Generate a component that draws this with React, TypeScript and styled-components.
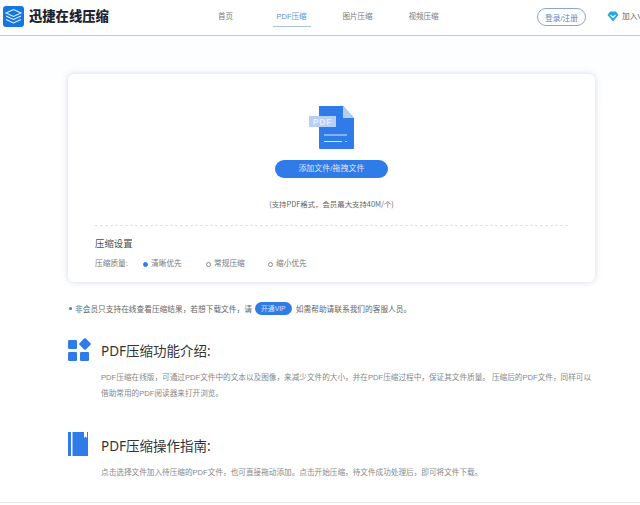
import React from "react";
import styled, { createGlobalStyle } from "styled-components";

const Global = createGlobalStyle`
  html, body { margin: 0; padding: 0; height: 505px; overflow: hidden; background: #fff; }
  body { font-family: "Liberation Sans", "Noto Sans CJK SC", sans-serif; color: #666; }
`;
const Page = styled.div`
  width: 640px; height: 505px; overflow: hidden; display: flex; flex-direction: column;
  background: linear-gradient(#fbfdff, #fff 120px);
`;
const Header = styled.header`
  height: 36px; flex: none; box-sizing: border-box; border-bottom: 1px solid #bccdd6; background: #fff;
  display: flex; align-items: stretch; padding-left: 3px; position: relative; white-space: nowrap;
`;
const Brand = styled.div`
  width: 189.5px; flex: none; display: flex; align-items: flex-start; gap: 5px; padding-top: 6px; box-sizing: border-box;
`;
const BrandName = styled.span`
  font-size: 13.3px; line-height: 20px; font-weight: 900; color: #1c2430;
  font-family: "Noto Sans CJK SC", sans-serif;
`;
const Nav = styled.nav`display: flex; width: 344.5px; flex: none;`;
const NavItem = styled.a<{ $active?: boolean }>`
  width: 66px; box-sizing: border-box; height: 28px; font-size: 7.5px;
  text-align: center; color: ${p => (p.$active ? "#5d8fd0" : "#777")};
  display: block;
  span { display: inline-block; height: 27px; padding: 0 4px; box-sizing: border-box; line-height: 34px;
    border-bottom: ${p => (p.$active ? "1px solid #a9c5dc" : "none")}; }
`;
const Login = styled.button`
  width: 49px; height: 18px; margin-top: 8px; flex: none; padding: 0; border: 1px solid #8fa6c4; border-radius: 9px;
  background: #fff; color: #5d86c4; font: 7.7px "Liberation Sans", "Noto Sans CJK SC", sans-serif;
`;
const Vip = styled.div`
  display: flex; align-items: flex-start; gap: 3px; margin-left: 21px; padding-top: 11px; font-size: 7.7px; line-height: 12px; color: #666;
`;
const Main = styled.main`flex: 1; padding: 38px 45px 0 68px; position: relative;`;
const Card = styled.section`
  width: 527px; height: 208px; box-sizing: border-box; background: #fff; border-radius: 6px;
  box-shadow: 0 0 6px rgba(90, 120, 160, 0.28); padding: 32px 27px 0; display: flex; flex-direction: column;
`;
const DocIcon = styled.svg`width: 45px; height: 44px; display: block; margin: 0 auto;`;
const AddButton = styled.button`
  display: block; width: 113px; height: 18px; margin: 10px auto 0; border: none; border-radius: 9px; padding: 0;
  background: #2f7be8; color: #dbe8fb; font: 8px/18px "Liberation Sans", "Noto Sans CJK SC", sans-serif;
`;
const Support = styled.p`
  margin: 20px 0 0; text-align: center; font: 7.4px/12px "Noto Sans CJK SC", sans-serif; color: #666;
`;
const Divider = styled.div`margin-top: 15px; border-top: 1px dashed #dfe3e8;`;
const SettingsTitle = styled.h3`
  margin: 10px 0 0; font: 400 9.4px/14px "Noto Sans CJK SC", sans-serif; color: #4d4d4d;
`;
const QualityRow = styled.div`display: flex; align-items: center; margin-top: 8px; font-size: 7.7px; line-height: 12px; color: #777;`;
const QualityLabel = styled.span`width: 48px;`;
const RadioOption = styled.label<{ $w: number }>`
  width: ${p => p.$w}px; display: flex; align-items: center; gap: 3px;
`;
const RadioDot = styled.i<{ $on?: boolean }>`
  width: 5px; height: 5px; box-sizing: border-box; border-radius: 50%;
  border: 1px solid ${p => (p.$on ? "#2f7be8" : "#8a8a8a")}; background: ${p => (p.$on ? "#2f7be8" : "#fff")};
`;
const Notice = styled.div`
  margin: 19px 0 0 1px; display: flex; align-items: center; height: 14px; font-size: 7.7px; color: #666; white-space: nowrap;
`;
const Bullet = styled.i`width: 3px; height: 3px; border-radius: 50%; background: #2f7be8; margin-right: 3px;`;
const VipPill = styled.span`
  width: 37px; height: 13px; border-radius: 7px; background: #2f7be8; color: #d5e5fb; font-size: 6.8px; line-height: 13px;
  text-align: center; margin: 0 4px 0 3px;
`;
const Section = styled.section<{ $top: number; $h: number }>`
  margin-top: ${p => p.$top}px; height: ${p => p.$h}px; display: grid; grid-template-columns: 33px 1fr;
`;
const SecIcon = styled.svg<{ $lift: number }>`width: 25px; height: 25px; display: block; margin-top: -${p => p.$lift}px;`;
const SecTitle = styled.h2`
  margin: 0; font: 400 13.5px/24px "Noto Sans", "Noto Sans CJK SC", sans-serif; color: #333;
`;
const SecText = styled.p`
  margin: 7px 0 0; width: 495px; font-size: 7.64px; line-height: 16px; color: #888;
`;
const Footer = styled.div`position: absolute; left: 0; right: 0; top: 466px; border-top: 1px solid #e8e8e8;`;

export default function App() {
  return (
    <Page>
      <Global />
      <Header>
        <Brand>
          <svg width="21" height="21" viewBox="0 0 21 21">
            <rect width="21" height="21" rx="3" fill="#1478de" />
            <path d="M10.5 3.5 18 7l-7.5 3.5L3 7z" fill="none" stroke="#dff0ff" strokeWidth="1.1" />
            <path d="M3 10l7.5 3.5L18 10M3 13.5 10.5 17l7.5-3.5" fill="none" stroke="#dff0ff" strokeWidth="1.1" />
          </svg>
          <BrandName>迅捷在线压缩</BrandName>
        </Brand>
        <Nav>
          <NavItem><span>首页</span></NavItem>
          <NavItem $active><span>PDF压缩</span></NavItem>
          <NavItem><span>图片压缩</span></NavItem>
          <NavItem><span>视频压缩</span></NavItem>
        </Nav>
        <Login>登录/注册</Login>
        <Vip>
          <svg width="12" height="11" viewBox="0 0 12 11">
            <path d="M3 .5h6L11.5 4 6 10.5.5 4z" fill="#2aa6e6" />
            <path d="M3.5 4 6 6.5 8.5 4" fill="none" stroke="#fff" strokeWidth="1.1" />
          </svg>
          加入VIP
        </Vip>
      </Header>
      <Main>
        <Card>
          <DocIcon viewBox="0 0 45 44">
            <path d="M10 0h24l11 12v30a1 1 0 0 1-1 1H11a1 1 0 0 1-1-1z" fill="#2f7be8" />
            <path d="M34 0l11 12H34z" fill="#b3cff6" />
            <rect x="0" y="10" width="27" height="11" fill="#b5cffa" />
            <text x="13.5" y="18.8" textAnchor="middle" fontSize="8.5" fontFamily="Liberation Sans" fill="#e8f0fd" fontWeight="700" letterSpacing="0.8">PDF</text>
            <path d="M15 29h23M15 35.5h18" stroke="#dbe8fb" strokeWidth="1.2" />
            <path d="M36 35.5h2" stroke="#a9c8f5" strokeWidth="1.2" />
          </DocIcon>
          <AddButton>添加文件/拖拽文件</AddButton>
          <Support>(支持PDF格式，会员最大支持40M/个)</Support>
          <Divider />
          <SettingsTitle>压缩设置</SettingsTitle>
          <QualityRow>
            <QualityLabel>压缩质量:</QualityLabel>
            <RadioOption $w={63}><RadioDot $on />清晰优先</RadioOption>
            <RadioOption $w={62}><RadioDot />常规压缩</RadioOption>
            <RadioOption $w={62}><RadioDot />缩小优先</RadioOption>
          </QualityRow>
        </Card>
        <Notice>
          <Bullet />非会员只支持在线查看压缩结果，若想下载文件，请<VipPill>开通VIP</VipPill>如需帮助请联系我们的客服人员。
        </Notice>
        <Section $top={24} $h={85}>
          <SecIcon $lift={1} viewBox="0 0 25 25">
            <rect x="0" y="2" width="9" height="9" rx="1.2" fill="#2f7be8" />
            <rect x="12.5" y="1.5" width="9" height="9" rx="1.2" fill="#2f7be8" transform="rotate(45 17 6)" />
            <rect x="0" y="14" width="9" height="9" rx="1.2" fill="#2f7be8" />
            <rect x="12" y="14" width="9" height="9" rx="1.2" fill="#2f7be8" />
          </SecIcon>
          <div>
            <SecTitle>PDF压缩功能介绍:</SecTitle>
            <SecText>PDF压缩在线版，可通过PDF文件中的文本以及图像，来减少文件的大小，并在PDF压缩过程中，保证其文件质量。 压缩后的PDF文件，同样可以借助常用的PDF阅读器来打开浏览。</SecText>
          </div>
        </Section>
        <Section $top={10} $h={60}>
          <SecIcon $lift={2} viewBox="0 0 25 25">
            <rect x="0" y="0" width="3" height="24" fill="#2f7be8" />
            <path d="M4.5 0H16v6l1.5-1.5L19 6V0h1v24H4.5z" fill="#2f7be8" />
          </SecIcon>
          <div>
            <SecTitle>PDF压缩操作指南:</SecTitle>
            <SecText>点击选择文件加入待压缩的PDF文件，也可直接拖动添加。点击开始压缩，待文件成功处理后，即可将文件下载。</SecText>
          </div>
        </Section>
        <Footer />
      </Main>
    </Page>
  );
}
